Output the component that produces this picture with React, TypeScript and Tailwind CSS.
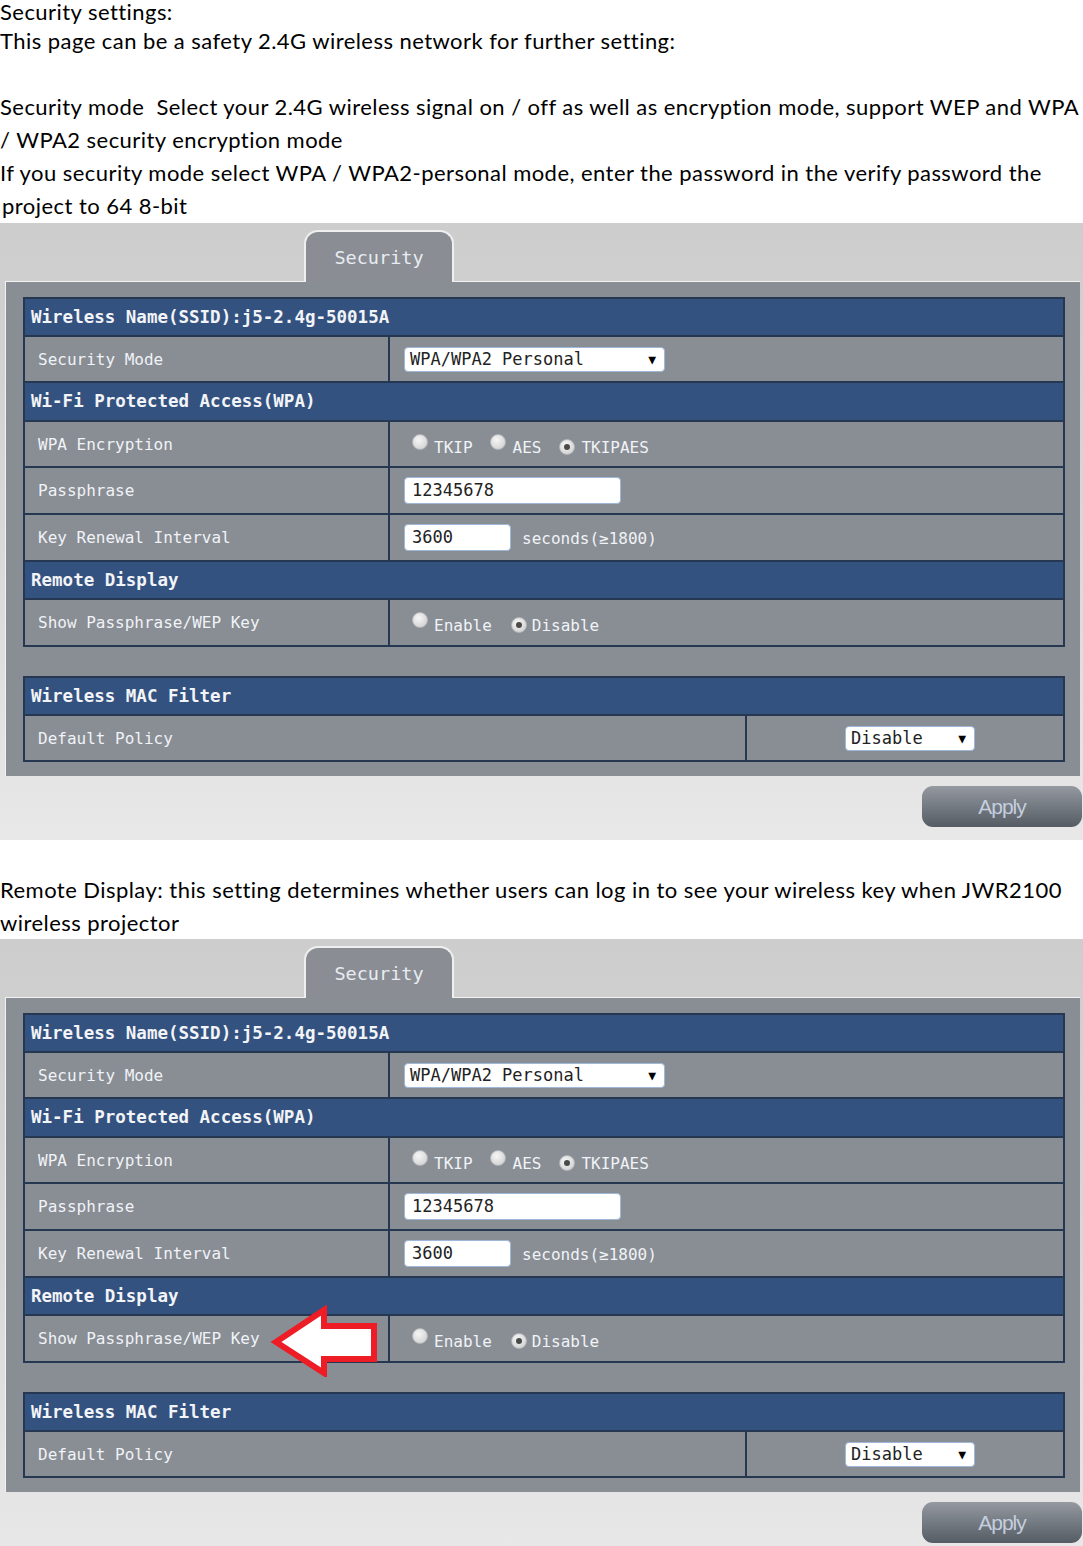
import React from 'react';

const mono = "font-['DejaVu_Sans_Mono','Liberation_Mono',monospace] tracking-normal";

const Radio = ({ checked }: { checked?: boolean }) => (
  <span className="inline-flex h-[16px] w-[16px] -translate-y-[3px] items-center justify-center rounded-full border border-[#b4b6b9] bg-[radial-gradient(circle_at_40%_35%,#f6f6f6,#cacaca)]">
    {checked && <span className="h-[6px] w-[6px] rounded-full bg-[#4a4a4a]" />}
  </span>
);

const Select = ({ value, width }: { value: string; width: string }) => (
  <div className={`flex h-[25px] items-center justify-between rounded-[4px] border border-[#9fb7d8] bg-white pl-[5px] pr-[8px] text-[17px] text-[#222] ${width}`}>
    <span>{value}</span>
    <span className="text-[13px] text-black">▼</span>
  </div>
);

const Input = ({ value, width }: { value: string; width: string }) => (
  <div className={`flex h-[27px] items-center rounded-[4px] border border-[#9fb7d8] bg-white pl-[7px] text-[17px] text-[#222] ${width}`}>
    {value}
  </div>
);

const Header = ({ children, h = 'h-[38px]', first }: { children: React.ReactNode; h?: string; first?: boolean }) => (
  <div className={`flex ${first ? 'h-[36px]' : `${h} border-t-2 border-[#263752]`} items-center bg-[#34527f] pl-[6px] text-[17.5px] font-bold text-[#f2f4f8]`}>
    {children}
  </div>
);

const Row = ({ label, children, h = 'h-[47px]', cols = 'grid-cols-[363px_1fr]', center }: { label: string; children: React.ReactNode; h?: string; cols?: string; center?: boolean }) => (
  <div className={`grid ${cols} ${h} border-t-2 border-[#263752] bg-[#898d94]`}>
    <div className="flex items-center pl-[13px] text-[16px] text-[#f0f3f7]">{label}</div>
    <div className={`flex items-center border-l-2 border-[#263752] ${center ? 'justify-center pl-[10px]' : 'pl-[14px]'}`}>{children}</div>
  </div>
);

const RouterShot = ({ arrow }: { arrow?: boolean }) => (
  <div className={`h-[617px] w-[1083px] bg-gradient-to-b from-[#cdcdcd] via-[#d8d8d8] to-[#e8e8e8] ${mono}`}>
    <div className="flex pl-[304px] pt-[7px]">
      <div className="relative z-10 -mb-px flex h-[52px] w-[150px] items-center justify-center rounded-t-[14px] border-2 border-b-0 border-[#efefef] bg-[#8a8e94] text-[18.5px] text-[#e8ecf2]">
        Security
      </div>
    </div>
    <div className="ml-[5px] w-[1075px] border-l border-t border-[#f2f2f2] bg-[#898d94] pb-[14px] pl-[17px] pr-[15px] pt-[15px]">
      <div className="border-2 border-[#263752]">
        <Header first>Wireless Name(SSID):j5-2.4g-50015A</Header>
        <Row label="Security Mode" h="h-[46px]">
          <Select value="WPA/WPA2 Personal" width="w-[261px]" />
        </Row>
        <Header h="h-[39px]">Wi-Fi Protected Access(WPA)</Header>
        <Row label="WPA Encryption" h="h-[46px]">
          <div className="flex items-center pt-[6px] text-[16px] text-[#f0f3f7]">
            <span className="ml-[8px]"><Radio /></span>
            <span className="ml-[6px]">TKIP</span>
            <span className="ml-[17px]"><Radio /></span>
            <span className="ml-[7px]">AES</span>
            <span className="ml-[18px]"><Radio checked /></span>
            <span className="ml-[6px]">TKIPAES</span>
          </div>
        </Row>
        <Row label="Passphrase">
          <Input value="12345678" width="w-[217px]" />
        </Row>
        <Row label="Key Renewal Interval">
          <Input value="3600" width="w-[107px]" />
          <span className="ml-[11px] pt-[2px] text-[16px] text-[#f0f3f7]">seconds(≥1800)</span>
        </Row>
        <Header>Remote Display</Header>
        <div className="relative">
          <Row label="Show Passphrase/WEP Key">
            <div className="flex items-center pt-[6px] text-[16px] text-[#f0f3f7]">
              <span className="ml-[8px]"><Radio /></span>
              <span className="ml-[6px]">Enable</span>
              <span className="ml-[19px]"><Radio checked /></span>
              <span className="ml-[5px]">Disable</span>
            </div>
          </Row>
          {arrow && (
            <svg className="absolute left-[245px] top-[-9px]" width="110" height="72" viewBox="0 0 110 72">
              <polygon
                points="6,37 54,5 54,21 104,21 104,54 54,54 54,68"
                fill="#ffffff"
                stroke="#ee1c25"
                strokeWidth="6"
                strokeLinejoin="miter"
              />
            </svg>
          )}
        </div>
      </div>
      <div className="mt-[29px] border-2 border-[#263752]">
        <Header first>Wireless MAC Filter</Header>
        <Row label="Default Policy" h="h-[46px]" cols="grid-cols-[720px_1fr]" center>
          <Select value="Disable" width="w-[130px]" />
        </Row>
      </div>
    </div>
    <div className="flex justify-end pr-px pt-[10px]">
      <div className="flex h-[41px] w-[160px] items-center justify-center rounded-[11px] bg-gradient-to-b from-[#959aa1] to-[#565c64] font-['Liberation_Sans',Arial,sans-serif] text-[21px] tracking-[-1px] text-[#c4cede]">
        Apply
      </div>
    </div>
  </div>
);

export default function App() {
  return (
    <div className="w-[1083px] overflow-hidden bg-white font-['Lato','Open_Sans',sans-serif] text-[22px] leading-[33px] tracking-[0.45px] text-black">
      <div>
        <p className="whitespace-nowrap leading-[24px]">Security settings:</p>
        <p className="whitespace-nowrap">This page can be a safety 2.4G wireless network for further setting:</p>
        <p>&nbsp;</p>
        <p className="whitespace-nowrap">Security mode&nbsp; Select your 2.4G wireless signal on / off as well as encryption mode, support WEP and WPA</p>
        <p className="whitespace-nowrap">/ WPA2 security encryption mode</p>
        <p className="whitespace-nowrap">If you security mode select WPA / WPA2-personal mode, enter the password in the verify password the</p>
        <p className="whitespace-nowrap pl-[2px]">project to 64 8-bit</p>
      </div>
      <div className="mt-px">
        <RouterShot />
      </div>
      <p>&nbsp;</p>
      <p className="whitespace-nowrap">Remote Display: this setting determines whether users can log in to see your wireless key when JWR2100</p>
      <p className="whitespace-nowrap">wireless projector</p>
      <RouterShot arrow />
    </div>
  );
}
